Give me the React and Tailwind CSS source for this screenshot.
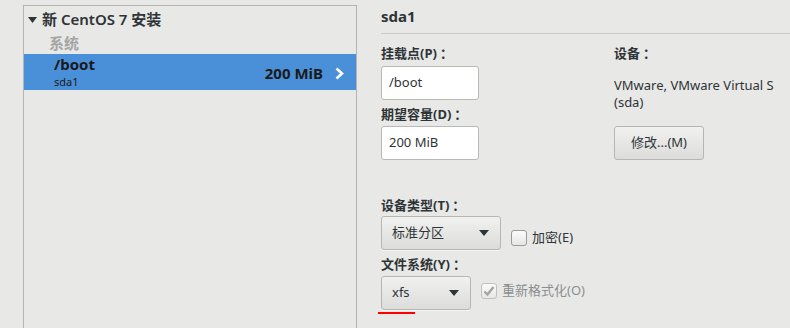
import React from "react";

const font = { fontFamily: '"Noto Sans", "Noto Sans CJK SC", sans-serif' };

function Caret() {
  return (
    <svg width="10" height="6" viewBox="0 0 10 6" className="shrink-0">
      <path d="M0 0 L10 0 L5 6 Z" fill="#2e3436" />
    </svg>
  );
}

function Combo({ label, width }) {
  return (
    <div
      className={`${width} h-[34px] flex items-center justify-between pl-[10px] pr-[11px] rounded-[3px] border border-[#b6b6b3] bg-gradient-to-b from-[#f1f1f0] to-[#dcdcda] shadow-[0_1px_0_rgba(255,255,255,0.6)] text-[13px] text-[#2e3436]`}
    >
      <span>{label}</span>
      <Caret />
    </div>
  );
}

function Check({ checked, disabled, label }) {
  return (
    <div className={`flex items-center gap-[5px] text-[13px] ${disabled ? "text-[#8b8e8f]" : "text-[#2e3436]"}`}>
      <div
        className={`w-[16px] h-[16px] rounded-[3px] border flex items-center justify-center bg-gradient-to-b from-[#fbfbfb] to-[#e6e6e5] ${
          disabled ? "border-[#c0c0be]" : "border-[#9a9a98]"
        }`}
      >
        {checked && (
          <svg width="12" height="12" viewBox="0 0 12 12">
            <path d="M1.5 6.5 L4.5 9.5 L10.5 2" stroke="#a3a5a6" strokeWidth="2.4" fill="none" />
          </svg>
        )}
      </div>
      <span>{label}</span>
    </div>
  );
}

function Label({ text, className = "" }) {
  return (
    <div className={`h-[18px] leading-[18px] text-[13px] font-bold text-[#2e3436] flex ${className}`}>
      <span>{text}</span>
      <span className="ml-[3px]">：</span>
    </div>
  );
}

function Field({ value }) {
  return (
    <div className="w-[98px] h-[34px] flex items-center px-[7px] bg-white border border-[#b9b9b6] rounded-[3px] text-[13px] text-[#2e3436]">
      {value}
    </div>
  );
}

export default function App() {
  return (
    <div className="w-[790px] h-[328px] flex bg-[#e8e8e7] overflow-hidden" style={font}>
      {/* left list */}
      <div className="w-[357px] shrink-0 pl-[23px] pt-[5px] h-full">
        <div className="h-full border-l border-t border-r border-[#b4b4b2] flex flex-col">
          <div className="h-[27px] flex items-center pl-[4px] gap-[5px] text-[15px] font-semibold text-[#2e3436]">
            <svg width="9" height="6" viewBox="0 0 9 6">
              <path d="M0 0 L9 0 L4.5 6 Z" fill="#2e3436" />
            </svg>
            <span>新 CentOS 7 安装</span>
          </div>
          <div className="h-[21px] flex items-center pl-[25px] text-[15px] font-bold text-[#a3a5a5]">系统</div>
          <div className="h-[36px] bg-[#4a90d9] flex items-center justify-between pl-[30px] pr-[12px]">
            <div className="flex flex-col gap-[2px]">
              <span className="text-[15px] leading-[17px] font-bold text-[#1a1a1a]">/boot</span>
              <span className="text-[11px] leading-[13px] text-[#1a1a1a]">sda1</span>
            </div>
            <div className="flex items-center gap-[12px] pt-[2px]">
              <span className="text-[15px] font-bold text-[#1a1a1a]">200 MiB</span>
              <svg width="9" height="13" viewBox="0 0 9 13">
                <path d="M1.5 1.5 L7 6.5 L1.5 11.5" stroke="#ffffff" strokeWidth="2.6" fill="none" />
              </svg>
            </div>
          </div>
        </div>
      </div>

      {/* right details */}
      <div className="flex-1 pl-[24px] flex flex-col">
        <div className="h-[34px] border-b border-[#c9c9c7] flex items-center pb-[1px] text-[15px] font-bold text-[#2e3436]">
          sda1
        </div>
        <div className="flex">
          <div className="w-[233px] shrink-0 flex flex-col">
            <Label text="挂载点(P)" className="mt-[10px]" />
            <div className="mt-[4px]">
              <Field value="/boot" />
            </div>
            <Label text="期望容量(D)" className="mt-[5px]" />
            <div className="mt-[3px]">
              <Field value="200 MiB" />
            </div>
            <Label text="设备类型(T)" className="mt-[36px]" />
            <div className="mt-[2px] flex items-start gap-[10px]">
              <Combo label="标准分区" width="w-[120px]" />
              <div className="mt-[12px]">
                <Check label="加密(E)" />
              </div>
            </div>
            <Label text="文件系统(Y)" className="mt-[5px]" />
            <div className="mt-[3px] flex items-start gap-[10px]">
              <div className="flex flex-col">
                <Combo label="xfs" width="w-[90px]" />
                <div className="ml-[-3px] mt-[2px] w-[37px] h-[2px] bg-[#ff0000]" />
              </div>
              <div className="mt-[5px]">
                <Check checked disabled label="重新格式化(O)" />
              </div>
            </div>
          </div>
          <div className="flex flex-col">
            <Label text="设备" className="mt-[10px]" />
            <div className="mt-[15px] text-[13px] leading-[17px] text-[#2e3436]">
              VMware, VMware Virtual S
              <br />
              (sda)
            </div>
            <button className="mt-[15px] w-[90px] h-[34px] rounded-[3px] border border-[#b6b6b3] bg-gradient-to-b from-[#f1f1f0] to-[#dcdcda] text-[13px] text-[#2e3436]">
              修改...(M)
            </button>
          </div>
        </div>
      </div>
    </div>
  );
}
